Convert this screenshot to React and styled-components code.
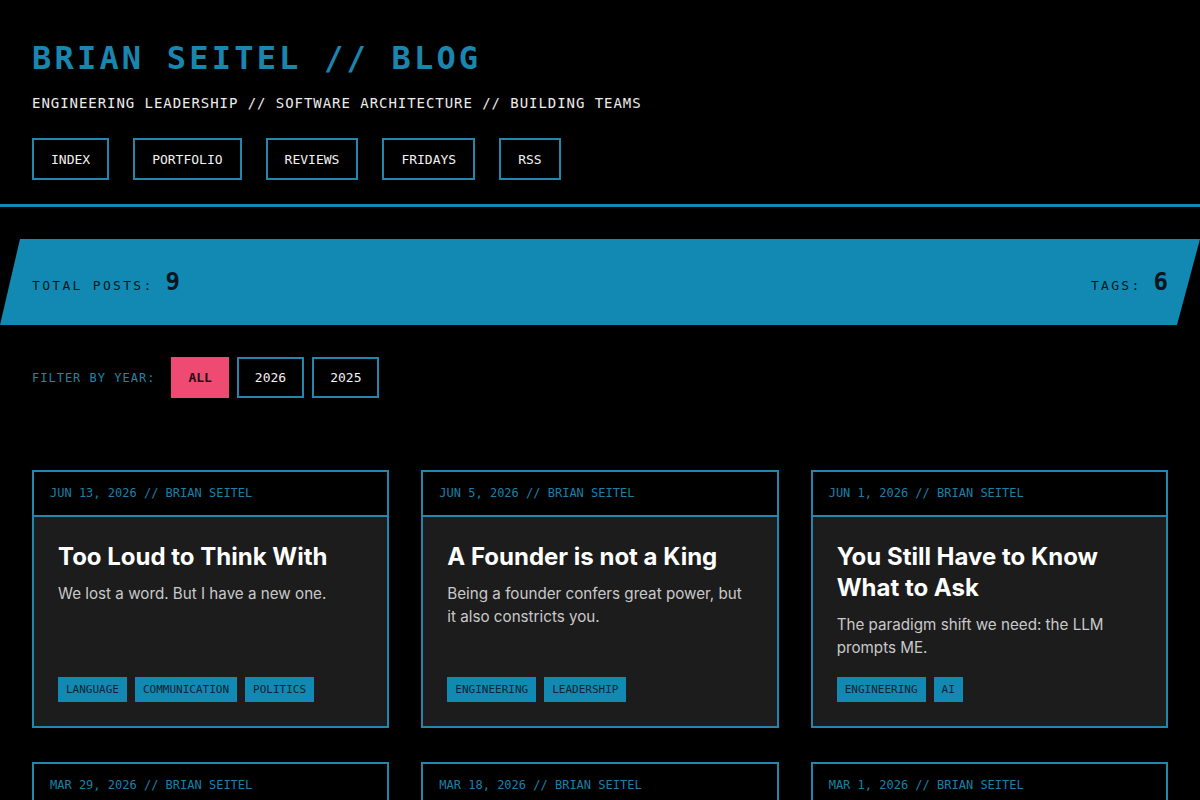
import React from 'react';
import styled, { createGlobalStyle } from 'styled-components';

const BLUE = '#1289b2';
const LINE = '#2486ad';
const MONO = '"DejaVu Sans Mono", "Liberation Mono", monospace';
const SANS = 'Inter, "Noto Sans", sans-serif';

const GlobalStyle = createGlobalStyle`
  html, body {
    margin: 0;
    padding: 0;
    background: #000;
    color: #fff;
    font-family: ${MONO};
  }
  * { box-sizing: border-box; }
`;

const Header = styled.header`
  padding: 38px 32px 24px;
  border-bottom: 3px solid ${BLUE};
`;

const Title = styled.h1`
  margin: 0;
  font-family: ${MONO};
  font-size: 32px;
  line-height: 40px;
  font-weight: 700;
  letter-spacing: 3.2px;
  color: #1a86b0;
`;

const Subtitle = styled.p`
  margin: 15px 0 0;
  font-size: 14px;
  line-height: 20px;
  letter-spacing: 0.95px;
  color: #ececec;
`;

const Nav = styled.nav`
  display: flex;
  gap: 24px;
  margin-top: 25px;
`;

const NavLink = styled.a`
  display: flex;
  align-items: center;
  height: 42px;
  padding: 0 17px;
  border: 2px solid ${LINE};
  font-size: 13px;
  color: #f2f2f2;
  text-decoration: none;
`;

const Banner = styled.section`
  margin-top: 32px;
  height: 86px;
  background: ${BLUE};
  clip-path: polygon(20px 0, 100% 0, calc(100% - 23px) 100%, 0 100%);
  display: flex;
  align-items: center;
  justify-content: space-between;
  padding: 0 32px;
  color: #07161e;
`;

const Stat = styled.div`
  display: flex;
  align-items: baseline;
  gap: 12px;
`;

const StatLabel = styled.span`
  font-size: 13px;
  letter-spacing: 2.3px;
`;

const StatValue = styled.span`
  font-size: 24px;
  font-weight: 700;
`;

const Filter = styled.div`
  display: flex;
  align-items: center;
  gap: 8px;
  margin: 32px 32px 0;
`;

const FilterLabel = styled.span`
  font-size: 12px;
  letter-spacing: 1px;
  color: #1a86b0;
  margin-right: 8px;
`;

const YearButton = styled.button`
  height: 41px;
  padding: 0 ${({ $active }) => ($active ? 15 : 16)}px;
  font-family: ${MONO};
  font-size: 13px;
  font-weight: ${({ $active }) => ($active ? 700 : 400)};
  color: ${({ $active }) => ($active ? '#2a0a12' : '#f2f2f2')};
  background: ${({ $active }) => ($active ? '#ee4a72' : '#000')};
  border: 2px solid ${({ $active }) => ($active ? '#ee4a72' : LINE)};
  cursor: pointer;
`;

const Grid = styled.main`
  display: grid;
  grid-template-columns: repeat(3, 1fr);
  gap: 34px 32px;
  margin: 72px 32px 32px;
`;

const Card = styled.article`
  display: flex;
  flex-direction: column;
  border: 2px solid ${LINE};
`;

const Meta = styled.div`
  padding: 14px 16px;
  line-height: 15px;
  font-size: 12px;
  color: #1a80aa;
  background: #000;
  border-bottom: 2px solid ${LINE};
`;

const Body = styled.div`
  flex: 1;
  display: flex;
  flex-direction: column;
  padding: 24px;
  background: #1c1c1d;
`;

const PostTitle = styled.h2`
  margin: 0;
  font-family: ${SANS};
  font-size: 24px;
  line-height: 31px;
  font-weight: 700;
  color: #fff;
`;

const Excerpt = styled.p`
  margin: 10px 0 0;
  font-family: ${SANS};
  font-size: 15.2px;
  line-height: 23px;
  color: #c9c9c9;
`;

const Tags = styled.div`
  display: flex;
  flex-wrap: wrap;
  gap: 8px;
  margin-top: auto;
  padding-top: 18px;
`;

const Tag = styled.span`
  display: flex;
  align-items: center;
  height: 25px;
  padding: 0 8px;
  font-size: 11px;
  color: #0b2532;
  background: ${BLUE};
`;

const posts = [
  { date: 'JUN 13, 2026', title: 'Too Loud to Think With', text: 'We lost a word. But I have a new one.', tags: ['LANGUAGE', 'COMMUNICATION', 'POLITICS'] },
  { date: 'JUN 5, 2026', title: 'A Founder is not a King', text: 'Being a founder confers great power, but it also constricts you.', tags: ['ENGINEERING', 'LEADERSHIP'] },
  { date: 'JUN 1, 2026', title: 'You Still Have to Know What to Ask', text: 'The paradigm shift we need: the LLM prompts ME.', tags: ['ENGINEERING', 'AI'] },
  { date: 'MAR 29, 2026', title: 'Notes on Hiring', text: 'What I look for when building a team.', tags: ['LEADERSHIP'] },
  { date: 'MAR 18, 2026', title: 'Boring Architecture', text: 'The best systems are the ones nobody talks about.', tags: ['ENGINEERING'] },
  { date: 'MAR 1, 2026', title: 'Small Teams, Big Work', text: 'Why fewer people often ship more.', tags: ['TEAMS'] },
];

const App = () => (
  <>
    <GlobalStyle />
    <Header>
      <Title>BRIAN SEITEL // BLOG</Title>
      <Subtitle>ENGINEERING LEADERSHIP // SOFTWARE ARCHITECTURE // BUILDING TEAMS</Subtitle>
      <Nav>
        {['INDEX', 'PORTFOLIO', 'REVIEWS', 'FRIDAYS', 'RSS'].map(item => (
          <NavLink key={item} href="#">{item}</NavLink>
        ))}
      </Nav>
    </Header>
    <Banner>
      <Stat>
        <StatLabel>TOTAL POSTS:</StatLabel>
        <StatValue>9</StatValue>
      </Stat>
      <Stat>
        <StatLabel>TAGS:</StatLabel>
        <StatValue>6</StatValue>
      </Stat>
    </Banner>
    <Filter>
      <FilterLabel>FILTER BY YEAR:</FilterLabel>
      <YearButton $active>ALL</YearButton>
      <YearButton>2026</YearButton>
      <YearButton>2025</YearButton>
    </Filter>
    <Grid>
      {posts.map(post => (
        <Card key={post.date}>
          <Meta>{post.date} // BRIAN SEITEL</Meta>
          <Body>
            <PostTitle>{post.title}</PostTitle>
            <Excerpt>{post.text}</Excerpt>
            <Tags>
              {post.tags.map(tag => <Tag key={tag}>{tag}</Tag>)}
            </Tags>
          </Body>
        </Card>
      ))}
    </Grid>
  </>
);

export default App;
